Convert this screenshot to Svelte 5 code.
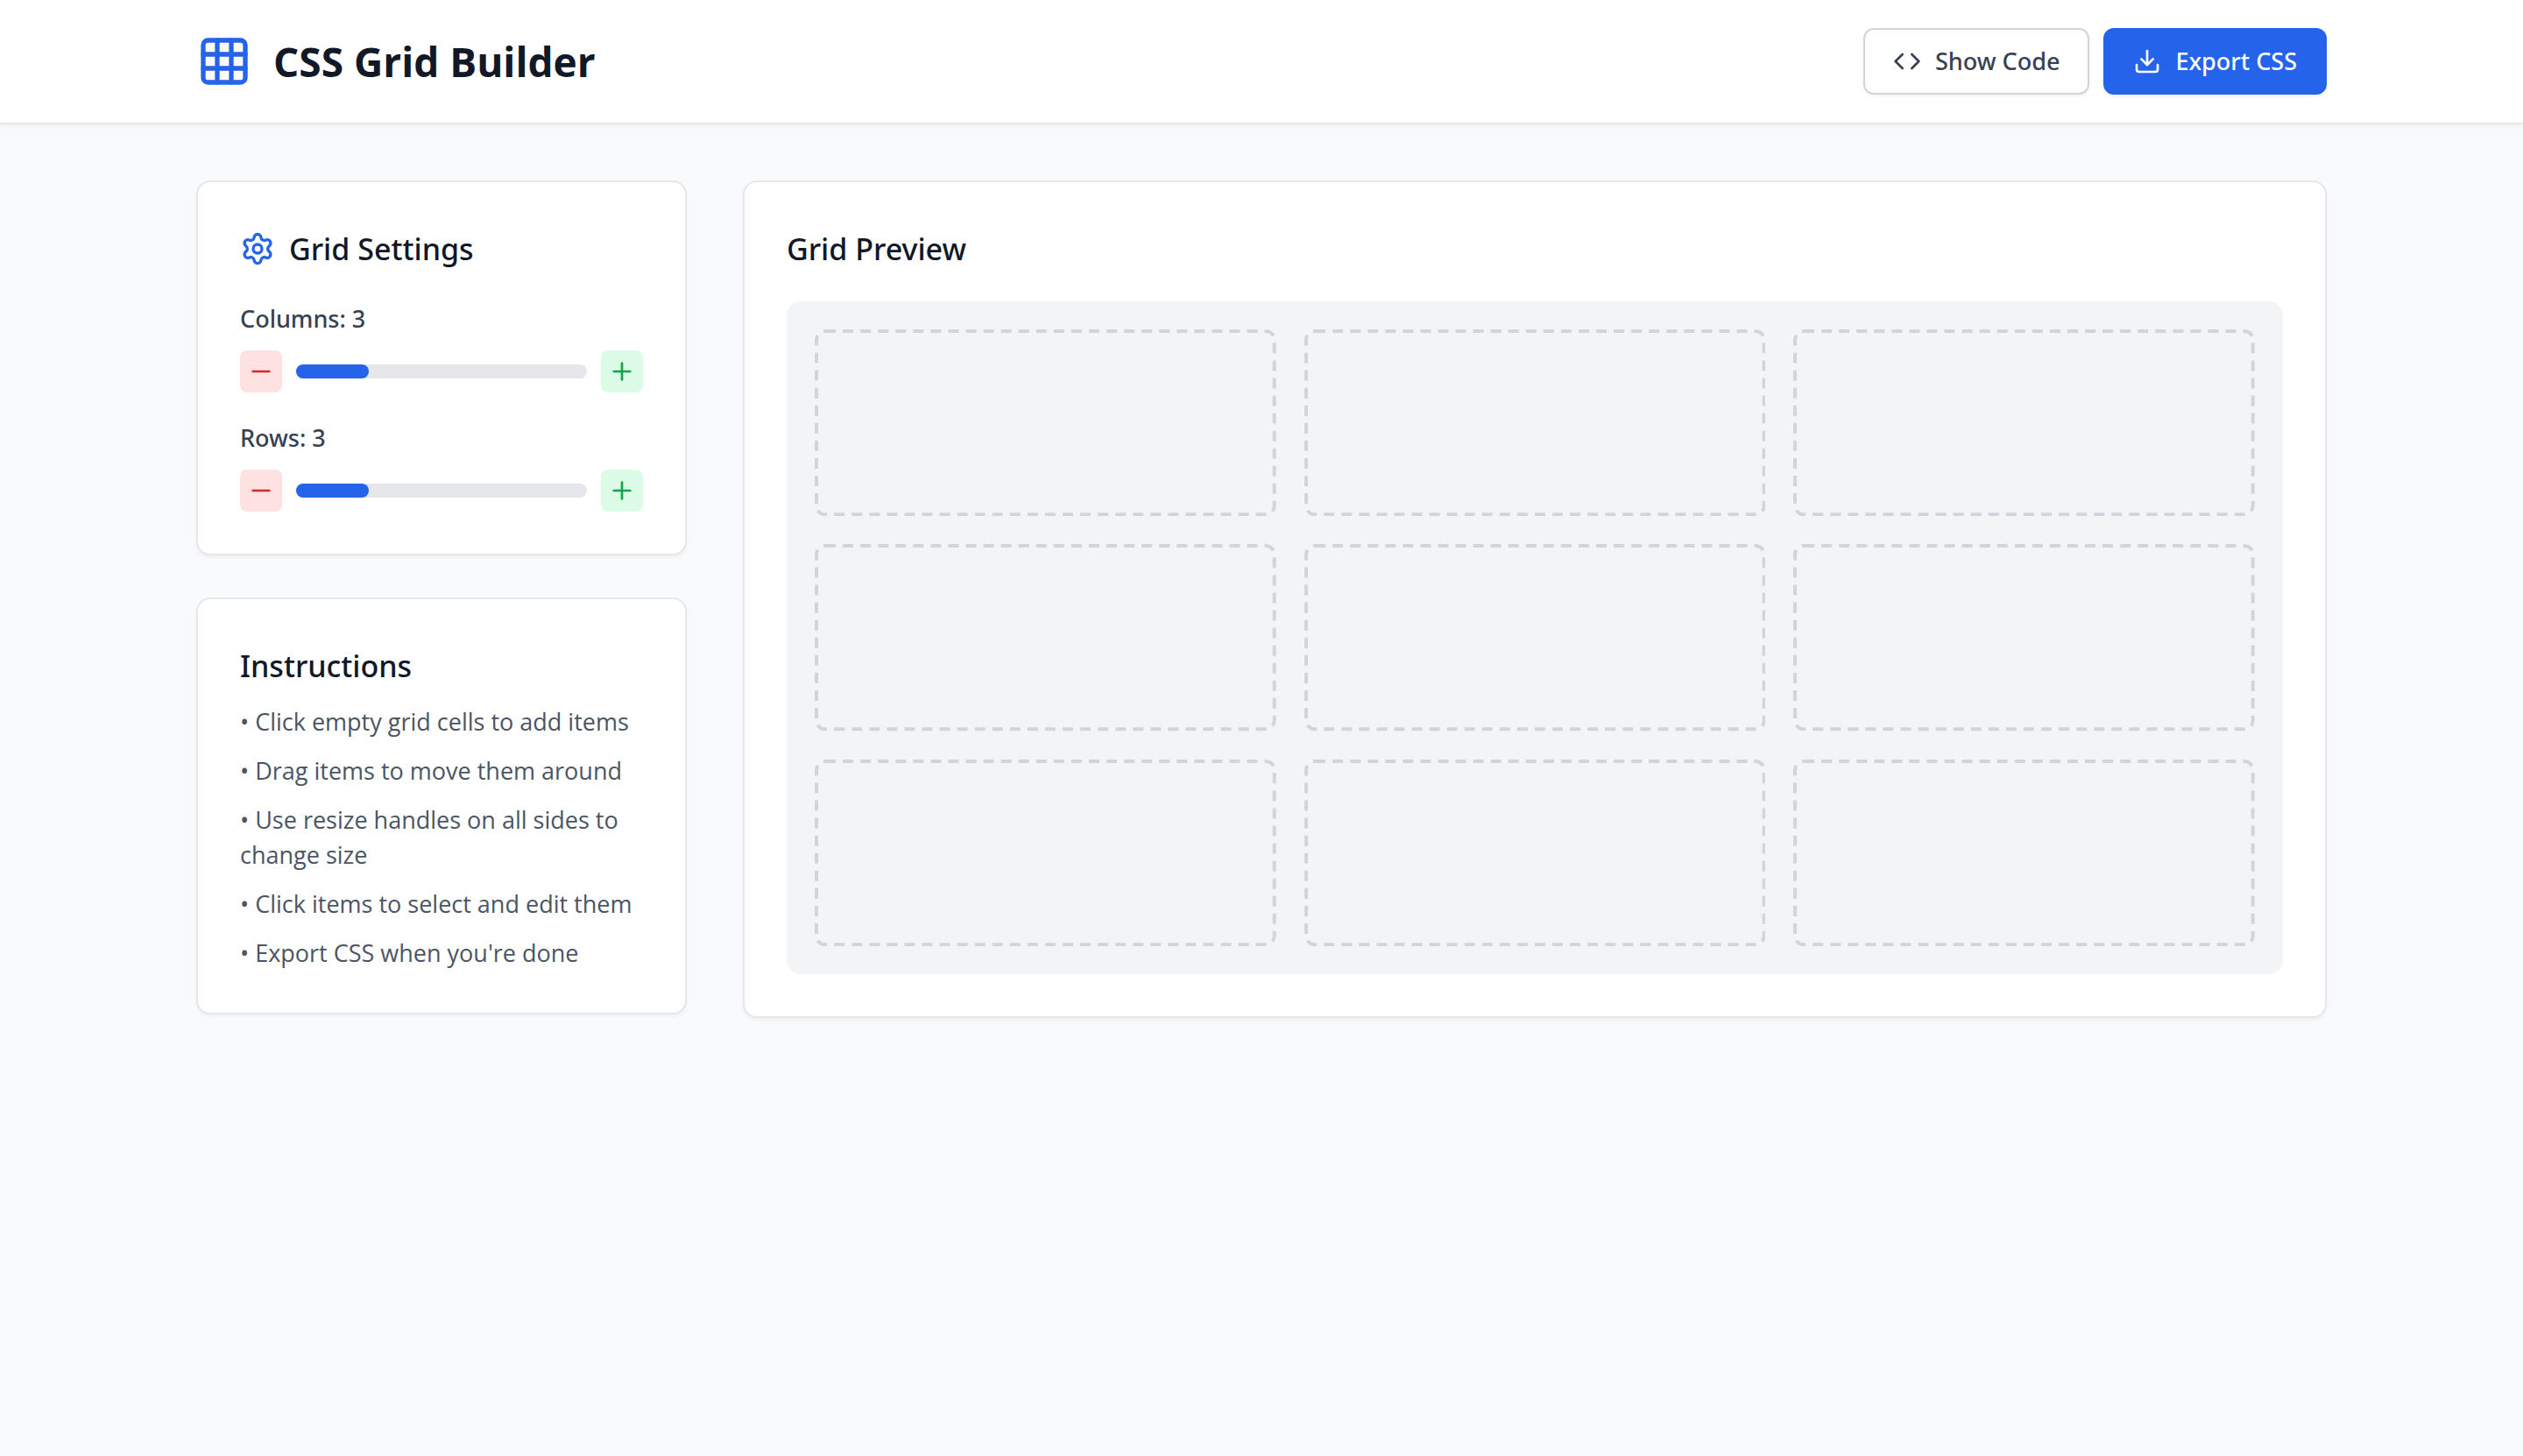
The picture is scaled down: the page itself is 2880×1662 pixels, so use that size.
<script>
  const MAX_TRACKS = 12;
  const GAP = 32;
  const STROKE = 4;
  const RADIUS = 10;
  const DASH = 12;
  const SPACE = 8;

  let columns = $state(3);
  let rows = $state(3);
  let canvasWidth = $state(0);
  let canvasHeight = $state(0);

  const clamp = (n) => Math.min(MAX_TRACKS, Math.max(1, n));

  let cells = $derived(Array.from({ length: columns * rows }, (_, i) => i));

  // Length given to each outline so that a whole number of dashes goes round it.
  let outlineLength = $derived.by(() => {
    const width = (canvasWidth - GAP * (columns + 1)) / columns - STROKE;
    const height = (canvasHeight - GAP * (rows + 1)) / rows - STROKE;
    const perimeter = 2 * (width + height) - 8 * RADIUS + 2 * Math.PI * RADIUS;
    return Math.max(1, Math.round(perimeter / (DASH + SPACE))) * (DASH + SPACE) + 2;
  });

  const steps = [
    'Click empty grid cells to add items',
    'Drag items to move them around',
    'Use resize handles on all sides to change size',
    'Click items to select and edit them',
    "Export CSS when you're done"
  ];
</script>

{#snippet stepper(label, value, change)}
  <div class="field" role="group" aria-label={label}>
    <div class="field-label">{label}: {value}</div>
    <div class="stepper">
      <button class="step minus" type="button" aria-label="Fewer {label}" onclick={() => change(-1)}>
        <svg class="icon" viewBox="0 0 24 24" aria-hidden="true"><path d="M5 12h14" /></svg>
      </button>
      <div
        class="track"
        role="progressbar"
        aria-label={label}
        aria-valuemin="0"
        aria-valuemax={MAX_TRACKS}
        aria-valuenow={value}
      >
        <div class="fill" style="width: {(value / MAX_TRACKS) * 100}%"></div>
      </div>
      <button class="step plus" type="button" aria-label="More {label}" onclick={() => change(1)}>
        <svg class="icon" viewBox="0 0 24 24" aria-hidden="true"><path d="M5 12h14" /><path d="M12 5v14" /></svg>
      </button>
    </div>
  </div>
{/snippet}

<div class="page">
  <header>
    <div class="container bar">
      <div class="brand">
        <svg class="icon logo" viewBox="0 0 24 24" aria-hidden="true">
          <rect width="18" height="18" x="3" y="3" rx="2" />
          <path d="M3 9h18" /><path d="M3 15h18" /><path d="M9 3v18" /><path d="M15 3v18" />
        </svg>
        <h1>CSS Grid Builder</h1>
      </div>
      <div class="actions">
        <button class="btn" type="button">
          <svg class="icon" viewBox="0 0 24 24" aria-hidden="true">
            <path d="m16 18 6-6-6-6" /><path d="m8 6-6 6 6 6" />
          </svg>
          Show Code
        </button>
        <button class="btn primary" type="button">
          <svg class="icon" viewBox="0 0 24 24" aria-hidden="true">
            <path d="M12 15V3" /><path d="M21 15v4a2 2 0 0 1-2 2H5a2 2 0 0 1-2-2v-4" /><path d="m7 10 5 5 5-5" />
          </svg>
          Export CSS
        </button>
      </div>
    </div>
  </header>

  <main class="container layout">
    <aside>
      <section class="card settings">
        <h2>
          <svg class="icon gear" viewBox="0 0 24 24" aria-hidden="true">
            <path d="M9.671 4.136a2.34 2.34 0 0 1 4.659 0 2.34 2.34 0 0 0 3.319 1.915 2.34 2.34 0 0 1 2.33 4.033 2.34 2.34 0 0 0 0 3.831 2.34 2.34 0 0 1-2.33 4.033 2.34 2.34 0 0 0-3.319 1.915 2.34 2.34 0 0 1-4.659 0 2.34 2.34 0 0 0-3.32-1.915 2.34 2.34 0 0 1-2.33-4.033 2.34 2.34 0 0 0 0-3.831A2.34 2.34 0 0 1 6.35 6.051a2.34 2.34 0 0 0 3.319-1.915" />
            <circle cx="12" cy="12" r="3" />
          </svg>
          Grid Settings
        </h2>
        {@render stepper('Columns', columns, (d) => (columns = clamp(columns + d)))}
        {@render stepper('Rows', rows, (d) => (rows = clamp(rows + d)))}
      </section>

      <section class="card instructions">
        <h2>Instructions</h2>
        <ul>
          {#each steps as step}
            <li>• {step}</li>
          {/each}
        </ul>
      </section>
    </aside>

    <section class="card preview">
      <h2>Grid Preview</h2>
      <div
        class="canvas"
        style="--columns: {columns}"
        bind:clientWidth={canvasWidth}
        bind:clientHeight={canvasHeight}
      >
        {#each cells as cell (cell)}
          <button class="cell" type="button" aria-label="Add item to cell {cell + 1}">
            <svg class="outline" aria-hidden="true">
              <rect x="2" y="2" rx={RADIUS} pathLength={outlineLength} stroke-dasharray="{DASH} {SPACE}" />
            </svg>
          </button>
        {/each}
      </div>
    </section>
  </main>
</div>

<style>
  :global(body) {
    margin: 0;
    background: #f9fafb;
  }

  .page {
    min-height: 100vh;
    background: #f9fafb;
    color: #111827;
    font-family: 'Noto Sans', 'Open Sans', sans-serif;
    font-size: 27px;
    line-height: 40px;
  }

  .page :global(*) {
    box-sizing: border-box;
  }

  h1,
  h2,
  ul {
    margin: 0;
    padding: 0;
  }

  h1,
  ul {
    font-family: 'Open Sans', 'Noto Sans', sans-serif;
  }

  button {
    font: inherit;
    cursor: pointer;
  }

  .icon {
    flex: none;
    width: 32px;
    height: 32px;
    fill: none;
    stroke: currentColor;
    stroke-width: 2;
    stroke-linecap: round;
    stroke-linejoin: round;
  }

  .container {
    max-width: 2560px;
    margin: 0 auto;
    padding: 0 64px;
  }

  header {
    background: #fff;
    border-bottom: 2px solid #e5e7eb;
    box-shadow: 0 2px 4px rgba(0, 0, 0, 0.05);
  }

  .bar {
    display: flex;
    flex-wrap: wrap;
    align-items: center;
    justify-content: space-between;
    gap: 16px;
    padding-top: 32px;
    padding-bottom: 32px;
  }

  .brand {
    display: flex;
    align-items: center;
    gap: 24px;
  }

  .logo {
    width: 64px;
    height: 64px;
    color: #2563eb;
  }

  h1 {
    font-size: 46px;
    line-height: 64px;
    font-weight: 700;
  }

  .actions {
    display: flex;
    gap: 16px;
  }

  .btn {
    display: flex;
    align-items: center;
    gap: 16px;
    padding: 16px 32px;
    border: 2px solid #d1d5db;
    border-radius: 12px;
    background: #fff;
    color: #374151;
    font-weight: 500;
    box-shadow: 0 2px 4px rgba(0, 0, 0, 0.05);
  }

  .primary {
    border-color: #2563eb;
    background: #2563eb;
    color: #fff;
  }

  .layout {
    display: grid;
    grid-template-columns: repeat(4, minmax(0, 1fr));
    align-items: start;
    gap: 64px;
    padding-top: 64px;
    padding-bottom: 64px;
  }

  aside {
    display: grid;
    gap: 48px;
  }

  .card {
    padding: 48px;
    border: 2px solid #e5e7eb;
    border-radius: 16px;
    background: #fff;
    box-shadow: 0 2px 4px rgba(0, 0, 0, 0.05);
  }

  h2 {
    display: flex;
    align-items: center;
    gap: 16px;
    font-size: 34px;
    line-height: 56px;
    font-weight: 500;
  }

  .gear {
    width: 40px;
    height: 40px;
    color: #2563eb;
  }

  .settings,
  .preview {
    display: grid;
    gap: 32px;
  }

  .field {
    display: grid;
    gap: 16px;
  }

  .field-label {
    color: #374151;
    font-weight: 500;
  }

  .stepper {
    display: flex;
    align-items: center;
    gap: 16px;
  }

  .step {
    display: flex;
    padding: 8px;
    border: 0;
    border-radius: 8px;
  }

  .minus {
    background: #fee2e2;
    color: #dc2626;
  }

  .plus {
    background: #dcfce7;
    color: #16a34a;
  }

  .track {
    flex: 1;
    height: 16px;
    border-radius: 8px;
    background: #e5e7eb;
  }

  .fill {
    height: 100%;
    border-radius: 8px;
    background: #2563eb;
  }

  .instructions {
    display: grid;
    gap: 16px;
    color: #4b5563;
  }

  .instructions h2 {
    color: #111827;
  }

  ul {
    display: grid;
    gap: 16px;
    list-style: none;
  }

  .preview {
    grid-column: span 3;
  }

  .canvas {
    display: grid;
    grid-template-columns: repeat(var(--columns), minmax(0, 1fr));
    grid-auto-rows: 1fr;
    gap: 32px;
    min-height: 768px;
    padding: 32px;
    border-radius: 16px;
    background: #f3f4f6;
  }

  .cell {
    display: grid;
    min-height: 0;
    padding: 0;
    border: 0;
    border-radius: 12px;
    background: transparent;
  }

  .outline {
    width: 100%;
    height: 100%;
    min-height: 0;
  }

  .outline rect {
    width: calc(100% - 4px);
    height: calc(100% - 4px);
    fill: none;
    stroke: #d1d5db;
    stroke-width: 4;
  }

  @media (max-width: 1400px) {
    .layout {
      grid-template-columns: minmax(0, 1fr);
    }

    .preview {
      grid-column: auto;
    }
  }
</style>
